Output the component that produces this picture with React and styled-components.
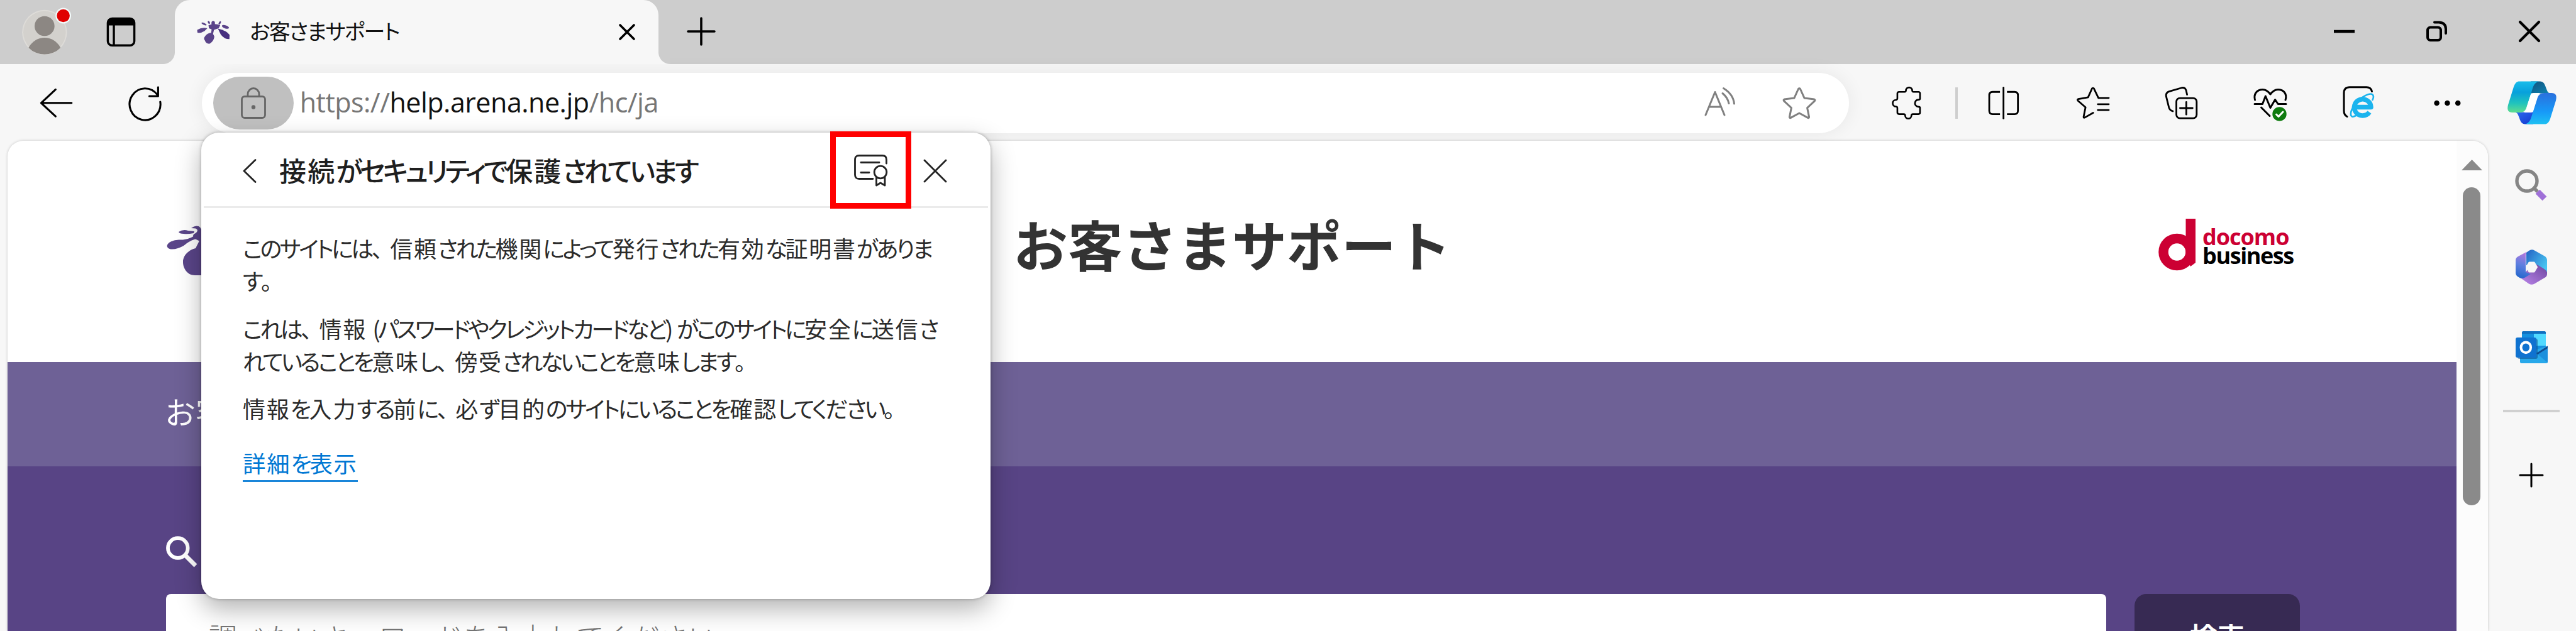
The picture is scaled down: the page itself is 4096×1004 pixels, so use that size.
import React from 'react';
import styled, { createGlobalStyle } from 'styled-components';

//? Styling
const GlobalStyle = createGlobalStyle`
  * {
    box-sizing: border-box;
  }
  body {
    margin: 0;
    overflow: hidden;
    background: #f7f7f7;
    font-family: 'Noto Sans CJK JP', 'Noto Sans', sans-serif;
  }
  p, h1, h2 {
    margin: 0;
    font-weight: 400;
  }
`;

const Browser = styled.div`
  position: relative;
  display: flex;
  flex-direction: column;
  width: 4096px;
  height: 1004px;
  overflow: hidden;
  background: #f7f7f7;
`;

const Svg = styled.svg`
  display: block;
  flex: none;
  overflow: visible;
  margin-left: ${(p) => p.$ml || 0}px;
  margin-top: ${(p) => p.$mt || 0}px;
`;

//* Tab strip
const TabStrip = styled.header`
  display: flex;
  align-items: center;
  height: 102px;
  background: #cdcdcd;
`;

const Tab = styled.div`
  position: relative;
  display: flex;
  align-items: center;
  width: 769px;
  height: 102px;
  margin-left: 62px;
  padding: 0 37px 0 34px;
  border-radius: 24px 24px 0 0;
  background: #f7f7f7;

  &::before,
  &::after {
    content: '';
    position: absolute;
    bottom: 0;
    width: 19px;
    height: 19px;
  }
  &::before {
    left: -19px;
    background: radial-gradient(circle at 0 0, #cdcdcd 18.5px, #f7f7f7 19.5px);
  }
  &::after {
    right: -19px;
    background: radial-gradient(circle at 100% 0, #cdcdcd 18.5px, #f7f7f7 19.5px);
  }
`;

const TabTitle = styled.span`
  flex: 1;
  margin: -5px 0 0 31px;
  color: #111;
  font-size: 34px;
  line-height: 60px;
  letter-spacing: -1.9px;
  font-feature-settings: 'palt';
  white-space: nowrap;
`;

const WindowControls = styled.div`
  display: flex;
  align-items: center;
  gap: 114px;
  margin: -3px 57px 0 auto;
`;

//* Toolbar
const Toolbar = styled.div`
  display: flex;
  align-items: center;
  height: 122px;
  padding-top: 1px;
`;

const AddressBar = styled.div`
  display: flex;
  align-items: center;
  width: 2619px;
  height: 96px;
  margin-left: 63px;
  padding: 0 53px 0 18px;
  border-radius: 48px;
  background: #fff;
  box-shadow: 0 0 30px rgba(0, 0, 0, 0.07);
`;

const SecurityPill = styled.div`
  display: flex;
  align-items: center;
  justify-content: center;
  width: 128px;
  height: 84px;
  border-radius: 42px;
  background: #c0c0c0;
`;

const Url = styled.span`
  flex: 1;
  margin: -1px 0 0 10px;
  color: #767676;
  font-family: 'Open Sans', 'Noto Sans', sans-serif;
  font-size: 43px;
  line-height: 60px;
  letter-spacing: -0.5px;

  b {
    color: #111;
    font-weight: 400;
  }
`;

const ToolbarDivider = styled.div`
  width: 4px;
  height: 50px;
  margin: 0 46px 0 52px;
  background: #cecece;
`;

//* Page
const Main = styled.div`
  display: flex;
  flex: 1;
  min-height: 0;
`;

const Page = styled.div`
  display: flex;
  width: 3944px;
  margin-left: 12px;
  border-radius: 25px 25px 0 0;
  background: #fff;
  box-shadow: 0 0 4px rgba(0, 0, 0, 0.2);
  overflow: hidden;
`;

const Site = styled.div`
  display: flex;
  flex-direction: column;
  width: 3894px;
`;

const SiteHeader = styled.div`
  display: flex;
  align-items: flex-start;
  height: 352px;
`;

const SiteTitle = styled.h1`
  width: 720px;
  margin: 113px 0 0 1237px;
  color: #333;
  font-size: 87px;
  font-weight: 700;
  line-height: 100px;
  white-space: nowrap;
`;

const Docomo = styled.div`
  display: flex;
  margin: 124px 0 0 1101px;
`;

const DocomoText = styled.div`
  margin: 14px 0 0 11px;
  font-family: 'Open Sans', sans-serif;
  font-weight: 700;
  font-size: 36px;
  line-height: 30px;
`;

const DocomoName = styled.div`
  color: #cc0033;
  letter-spacing: -1px;
`;

const DocomoUnit = styled.div`
  color: #000;
  letter-spacing: -1.4px;
`;

const SiteNav = styled.nav`
  height: 166px;
  padding: 43px 0 0 250px;
  background: #6e6196;
  color: #fff;
  font-size: 49px;
  line-height: 70px;
`;

const Hero = styled.section`
  flex: 1;
  min-height: 0;
  padding-left: 252px;
  background: #584485;
`;

const SearchRow = styled.div`
  display: flex;
  height: 130px;
  margin-top: 40px;
`;

const SearchInput = styled.div`
  width: 3085px;
  padding: 28px 0 0 68px;
  border-radius: 8px;
  background: #fff;
  color: #757575;
  font-size: 45px;
  font-weight: 300;
  line-height: 80px;
`;

const SearchButton = styled.div`
  width: 263px;
  margin-left: 45px;
  padding-top: 27px;
  border-radius: 19px;
  background: #372a53;
  color: #fff;
  font-size: 44px;
  font-weight: 700;
  line-height: 80px;
  text-align: center;
`;

const Scrollbar = styled.div`
  width: 50px;
  padding-left: 8px;
  background: #fcfcfc;
`;

const Thumb = styled.div`
  width: 28px;
  height: 506px;
  margin: 27px 0 0 2px;
  border-radius: 14px;
  background: #8a8a8a;
`;

//* Edge sidebar
const Sidebar = styled.aside`
  display: flex;
  flex-direction: column;
  align-items: center;
  width: 140px;
  padding-right: 2px;
`;

const SidebarDivider = styled.div`
  width: 90px;
  height: 4px;
  margin-top: 74px;
  background: #d0d0d0;
`;

//* Site information popup
const Popup = styled.div`
  position: absolute;
  left: 320px;
  top: 211px;
  width: 1255px;
  height: 742px;
  border-radius: 28px;
  background: #fff;
  box-shadow: 0 0 5px rgba(0, 0, 0, 0.3), 0 16px 40px rgba(0, 0, 0, 0.3);
`;

const PopupHeader = styled.div`
  display: flex;
  align-items: center;
  height: 120px;
  margin: 0 4px;
  padding: 4px 0 0 62px;
  border-bottom: 3px solid #ebebeb;
`;

const PopupTitle = styled.h2`
  width: 702px;
  margin: -4px 0 0 36px;
  color: #1f1f1f;
  font-size: 43px;
  font-weight: 500;
  line-height: 60px;
  white-space: nowrap;
`;

const Highlight = styled.div`
  position: absolute;
  left: 1000px;
  top: -2px;
  width: 129px;
  height: 123px;
  border: 9.5px solid #f00;
`;

const PopupBody = styled.div`
  padding: 37px 0 0 66px;
  color: #2b2b2b;
  font-weight: 300;
`;

const Paragraph = styled.p`
  margin-bottom: 23.5px;
`;

const TextLine = styled.span`
  display: block;
  font-size: 36px;
  line-height: 52px;
  white-space: nowrap;
`;

const DetailsLink = styled.a`
  display: inline-block;
  height: 57px;
  margin-top: 11px;
  border-bottom: 3px solid #1a86d9;
  color: #0078d4;
  font-size: 36.4px;
  font-weight: 400;
  line-height: 52px;
`;

//* UI text: kana is set tight, kanji keeps its full width
const Kana = styled.span`
  letter-spacing: ${(p) => p.$tight}em;
  word-spacing: 0.14em;
  font-feature-settings: 'palt';
`;

const Kanji = styled.span`
  letter-spacing: 0.05em;
`;

const Mark = styled.span`
  letter-spacing: -0.18em;
`;

function UiText({ children, tight = -0.1 }) {
  return children
    .split(/([一-龠]+|[、。])/)
    .filter(Boolean)
    .map((run, i) => {
      if (/[、。]/.test(run)) return <Mark key={i}>{run}</Mark>;
      if (/[一-龠]/.test(run)) return <Kanji key={i}>{run}</Kanji>;
      return <Kana key={i} $tight={tight}>{run}</Kana>;
    });
}

//? Icons
function Icon({ box, scale = 1, ml, mt, stroke = '#000', width = 3, children }) {
  return (
    <Svg
      $ml={ml}
      $mt={mt}
      width={box[2] * scale}
      height={box[3] * scale}
      viewBox={box.join(' ')}
      fill="none"
      stroke={stroke}
      strokeWidth={width}
      strokeLinecap="round"
      strokeLinejoin="round"
    >
      {children}
    </Svg>
  );
}

const S = 0.3103;

const Avatar = () => (
  <Icon box={[45, 10, 260, 250]} scale={S} ml={32.6} stroke="none">
    <circle cx="167" cy="137" r="115" fill="#dedcd8" />
    <circle cx="167" cy="137" r="109" fill="#d3d1cd" />
    <circle cx="167" cy="105" r="51" fill="#8c8783" />
    <path d="M85 216C104 182 134 165 167 165s63 17 82 51A115 115 0 0 1 85 216z" fill="#8c8783" />
    <circle cx="263" cy="52" r="40" fill="#f2fbfb" />
    <circle cx="263" cy="52" r="33" fill="#e00000" />
  </Icon>
);

const TabsIcon = () => (
  <Icon box={[480, 55, 155, 158]} scale={S} ml={54.3} width={11}>
    <rect x="491" y="66" width="136" height="138" rx="22" />
    <path d="M491 102V88q0-22 22-22h92q22 0 22 22v14z" fill="#000" stroke="none" />
    <path d="M522 100v102" />
  </Icon>
);

const Favicon = () => (
  <Icon box={[945, 65, 175, 130]} scale={S} stroke="none">
    <g fill="#5a4389">
      <path d="M1008 94q32-12 60 0l-8 16-24 8-5 22-10-4 3-20-14-6z" />
      <path d="M950 118q28-16 52-8l-14 14q-22 14-37 8z" />
      <path d="M986 158q10-20 28-24 18-2 24 20-4 26-26 36-18-2-22-16-8-8-4-16z" />
      <path d="M1056 112q44 10 60 32l-1 22q-26 0-44-24z" fill="#472f80" />
      <ellipse cx="1095" cy="103" rx="19" ry="8" transform="rotate(18 1095 103)" />
      <ellipse cx="985" cy="88" rx="14" ry="5" transform="rotate(25 985 88)" />
      <ellipse cx="1032" cy="84" rx="9" ry="12" />
      <ellipse cx="1066" cy="82" rx="5" ry="9" transform="rotate(30 1066 82)" />
      <ellipse cx="1010" cy="80" rx="5" ry="8" transform="rotate(-30 1010 80)" />
    </g>
  </Icon>
);

const CloseIcon = ({ size, ml, width = 3.6, color = '#000' }) => (
  <Icon box={[0, 0, size, size]} ml={ml} width={width} stroke={color}>
    <path d={`M2 2L${size - 2} ${size - 2}M${size - 2} 2L2 ${size - 2}`} />
  </Icon>
);

const PlusIcon = ({ size, ml, mt, width = 3.6 }) => (
  <Icon box={[0, 0, size, size]} ml={ml} mt={mt} width={width}>
    <path d={`M${size / 2} 1V${size - 1}M1 ${size / 2}H${size - 1}`} />
  </Icon>
);

const BackIcon = () => (
  <Icon box={[140, 410, 180, 160]} scale={S} ml={62} width={10}>
    <path d="M307 490H152M225 421L151 490L225 559" />
  </Icon>
);

const RefreshIcon = () => (
  <Icon box={[595, 405, 176, 180]} scale={S} ml={85.3} width={10}>
    <path d="M762 489A79 81 0 1 1 748 454M751 414V460H706" />
  </Icon>
);

const LockIcon = () => (
  <Icon box={[0, 0, 40, 50]} stroke="#666" width={2.8}>
    <rect x="1.5" y="14.5" width="37" height="34" rx="4.5" />
    <path d="M11 14V10.5a9 9 0 0 1 18 0V14" />
    <circle cx="20" cy="31.5" r="3.2" fill="#666" stroke="none" />
  </Icon>
);

const ReadAloudIcon = () => (
  <Icon box={[0, 0, 49, 50]} stroke="#808080" width={3}>
    <path d="M2 44L17 7.5L32 44M7.5 31H26.5M29 9.5Q37 16 39 25.5M30.5 1.5Q46 11 47.5 26" />
  </Icon>
);

const StarIcon = () => (
  <Icon box={[0, 0, 52, 50]} ml={76} stroke="#808080" width={3}>
    <path d="M24.5 2.5q1.5-2 3 0l6.6 14.6 15.8 2q1.8.8.5 2.6L38.6 32.6l3 14.6q-.2 2-2 1.2L26 41 12.4 48.4q-1.8.8-2-1.2l3-14.6L1.6 21.7q-1.3-1.8.5-2.6l15.8-2z" />
  </Icon>
);

const PuzzleIcon = () => (
  <Icon box={[15, 45, 160, 180]} scale={S} ml={67.5} width={8.5}>
    <path d="M56 78H84Q90 78 91 71A16 16 0 0 1 123 71Q124 78 130 78H155Q163 78 163 86V112Q163 118 155 118A18 18 0 0 0 155 154Q163 154 163 160V184Q163 192 155 192H126Q120 192 119 199A16 16 0 0 1 87 199Q86 192 80 192H56Q47 192 47 184V160Q47 154 40 153A17 17 0 0 1 40 119Q47 118 47 112V86Q47 78 56 78z" />
  </Icon>
);

const SplitIcon = () => (
  <Icon box={[505, 45, 175, 180]} scale={S} width={9}>
    <path d="M573 78H535Q518 78 518 95V175Q518 192 535 192H573M609 78H648Q665 78 665 95V175Q665 192 648 192H609" strokeLinecap="butt" />
    <path d="M591 56V214" />
  </Icon>
);

const FavoritesIcon = () => (
  <Icon box={[960, 45, 180, 180]} scale={S} ml={87} width={9}>
    <path d="M1131 109H1078L1055 61Q1050 55 1045 61L1025 106L975 115Q968 117 973 123L1012 157L1002 206Q1002 213 1009 209L1051 185M1075 141H1131M1075 171H1131" />
  </Icon>
);

const CollectionsIcon = () => (
  <Icon box={[1415, 45, 175, 180]} scale={S} ml={85.3} width={9}>
    <rect x="1478" y="110" width="104" height="103" rx="18" />
    <path d="M1529 130V194M1497 161H1561M1533 92L1528 70Q1522 53 1505 57L1440 76Q1422 83 1426 102L1440 158Q1444 172 1460 177" />
  </Icon>
);

const HealthIcon = () => (
  <Icon box={[0, 0, 56, 56]} ml={86}>
    <path d="M3.5 23C1 13 7 6.5 16 6.5C21 6.5 25 10 28 14C31 10 35 6.5 40 6.5C49 6.5 55 13 52 23M3 29.5H15.5L20.3 17L28 35.5L35.6 22.5L40.2 29.5H53M13.5 35L27 48.5" />
    <circle cx="42.5" cy="45.4" r="11.2" fill="#0f7b0f" stroke="none" />
    <path d="M37.5 46L41 49.5L48 42" stroke="#fff" />
  </Icon>
);

const IeModeIcon = () => (
  <Icon box={[0, 0, 54, 56]} ml={84}>
    <path d="M10 49.5Q5 47 5 40V12Q5 2.8 14 2.8H41Q48 3 49.5 9.5" />
    <path d="M24 34.5H48A13.3 13 0 1 0 45.5 42.5" stroke="#1bb4ee" strokeWidth="7.5" strokeLinecap="butt" />
    <path d="M24 48C13 54 14 42 22 30.5C30 19 46 11 50.5 14.5C52.5 16.5 52 20 50.5 23" stroke="#1bb4ee" strokeWidth="2.6" />
  </Icon>
);

const MoreIcon = () => (
  <Icon box={[0, 0, 48, 20]} ml={92} stroke="none">
    <g fill="#000">
      <circle cx="6.6" cy="10" r="4.3" />
      <circle cx="23.4" cy="10" r="4.3" />
      <circle cx="40.2" cy="10" r="4.3" />
    </g>
  </Icon>
);

const CopilotIcon = () => (
  <Icon box={[0, 0, 80, 71]} ml={70} stroke="none">
    <defs>
      <linearGradient id="cpLeft" x1="0" y1="0" x2="0" y2="1">
        <stop offset="0" stopColor="#18bdea" />
        <stop offset="0.35" stopColor="#07a0dc" />
        <stop offset="0.7" stopColor="#20c3bd" />
        <stop offset="1" stopColor="#5fdd8f" />
      </linearGradient>
      <linearGradient id="cpRight" x1="0" y1="0" x2="0" y2="1">
        <stop offset="0" stopColor="#2a70dd" />
        <stop offset="0.6" stopColor="#1799f8" />
        <stop offset="1" stopColor="#1fc0f2" />
      </linearGradient>
      <linearGradient id="cpTop" x1="0" y1="0" x2="1" y2="1">
        <stop offset="0" stopColor="#10527e" />
        <stop offset="1" stopColor="#0e86b4" />
      </linearGradient>
      <linearGradient id="cpBottom" x1="0" y1="0" x2="1" y2="1">
        <stop offset="0" stopColor="#2c6cf0" />
        <stop offset="1" stopColor="#1438cf" />
      </linearGradient>
    </defs>
    <path d="M38 1.5H53C58 1.5 60 5 62 11L64 16C65 19 67 20.5 71 20.5H38z" fill="url(#cpTop)" />
    <path d="M42 69.5H29C24 69.5 22 66 20 60L18 55C17 52 15 50.5 11 50.5H42z" fill="url(#cpBottom)" />
    <path d="M20 1.5H51C44 3 42 9 40 16L32 41C30 48 27 51 20 51H9C2 51 0 47 2 39L11 10C13 4 16 1.5 20 1.5z" fill="url(#cpLeft)" />
    <path d="M60 69.5H29C36 68 38 62 40 55L48 30C50 23 53 20 60 20H71C78 20 80 24 78 32L69 61C67 67 64 69.5 60 69.5z" fill="url(#cpRight)" />
    <path d="M46.5 20H53C50.5 21.5 49.5 24 48 29L42 48C41 50.5 39 51 37 51H27C30 50 31 45 32 41L38 22.5C39 20.5 40 20 46.5 20z" fill="#fff" />
  </Icon>
);

const IrisLogo = () => (
  <Icon box={[0, 0, 110, 90]} ml={252} mt={131} stroke="none">
    <g fill="#5a4589">
      <path d="M2 38C0 31 12 26 24 26.5C32 26.5 38 24 44 21L49 25C42 26 34 31 28 36C18 42 5 44 2 38z" />
      <path d="M20 14Q27 9.5 35 12L45 13L44 16Q34 18 28 17Q21 17 20 14z" />
      <path d="M40 8Q46 3 52 5Q58 8 58 22L56 30L44 24Q41 18 47 16Q53 11 47 8.5Q44 8 40 8z" />
      <path d="M27 62C27 50 38 42 47 40L54 26L68 30L60 83H46C34 83 27 72 27 62z" />
    </g>
  </Icon>
);

const SearchGlyph = () => (
  <Icon box={[0, 0, 52, 52]} mt={111} stroke="#fff" width={5.8}>
    <circle cx="18.8" cy="19" r="15.8" />
    <path d="M31 31L47 47" strokeWidth="6.8" strokeLinecap="butt" />
  </Icon>
);

const SidebarSearch = () => (
  <Icon box={[0, 0, 52, 52]} mt={45} stroke="#858585" width={5.4}>
    <circle cx="19" cy="19" r="16" />
    <path d="M31 31L36 36" strokeLinecap="butt" />
    <path d="M36 36L47 47" stroke="#9f70d8" strokeWidth="9.5" strokeLinecap="butt" />
  </Icon>
);

const Microsoft365 = () => (
  <Icon box={[0, 0, 51, 56]} mt={76} stroke="none">
    <defs>
      <linearGradient id="msLeft" x1="0.5" y1="0" x2="0.3" y2="1">
        <stop offset="0" stopColor="#b877dd" />
        <stop offset="0.5" stopColor="#5e7fe0" />
        <stop offset="1" stopColor="#2467cc" />
      </linearGradient>
      <linearGradient id="msTop" x1="0" y1="0" x2="1" y2="0.7">
        <stop offset="0" stopColor="#2462c4" />
        <stop offset="1" stopColor="#48c6f2" />
      </linearGradient>
      <linearGradient id="msBottom" x1="0" y1="1" x2="1" y2="0">
        <stop offset="0" stopColor="#c28bf0" />
        <stop offset="1" stopColor="#664099" />
      </linearGradient>
    </defs>
    <path d="M6 44Q1 41 1 36L16 36L30 18L50 26V39Q50 43 46 45L30 54.5Q25.5 57 21 54.5z" fill="url(#msBottom)" />
    <path d="M17 5L21 2Q25.5-1 30 1.5L46 10.5Q50 13 50 17V36Q48 32 44 30L34 24L17 25z" fill="url(#msTop)" />
    <path d="M18 3.5Q16 5 16 10V36L24 39L15 44.5Q9 47.5 4 43.5Q0 41 0 37V17Q0 13 4 11z" fill="url(#msLeft)" />
    <path d="M21.5 20.5H29.5L34 28L29.5 35.5H21.5L17 28z" fill="#f7f7f7" stroke="#f7f7f7" strokeWidth="2" />
  </Icon>
);

const Outlook = () => (
  <Icon box={[0, 0, 51, 51]} mt={74} stroke="none">
    <rect x="10" y="0" width="38" height="30" rx="2.5" fill="#1490df" />
    <path d="M10 3Q10 0 12.5 0H45.5Q48 0 48 3V4H10z" fill="#0f6fc0" />
    <path d="M29 4H48V23H29z" fill="#50d9ff" />
    <path d="M7 30H30L51 23.5V48.5Q51 51 48.5 51H9.5Q7 51 7 48.5z" fill="#28a8ea" />
    <path d="M51 24V50L33 35z" fill="#1b8fdd" />
    <path d="M33 35L51 23.5V27L35 37z" fill="#0f4c91" />
    <rect x="3" y="12" width="32" height="32" rx="3" fill="#0a4a86" opacity="0.55" />
    <rect x="0" y="10" width="33" height="32" rx="3" fill="#0f72d0" />
    <ellipse cx="16.3" cy="25.8" rx="7.8" ry="8.4" stroke="#fff" strokeWidth="4" />
  </Icon>
);

const CertificateIcon = () => (
  <Icon box={[0, 0, 53, 51]} ml={212} stroke="#222" width={2.8}>
    <path d="M30 38.5H8Q1.5 38.5 1.5 32V8Q1.5 1.5 8 1.5H45Q51.5 1.5 51.5 8V14M11 12.5H40M11 28.5H24" />
    <circle cx="42" cy="28" r="9.8" />
    <path d="M35.5 36V49L42 45L49 49V36" />
  </Icon>
);

function App() {
  return (
    <Browser>
      <GlobalStyle />
      <TabStrip>
        <Avatar />
        <TabsIcon />
        <Tab>
          <Favicon />
          <TabTitle>お客さまサポート</TabTitle>
          <CloseIcon size={26} />
        </Tab>
        <PlusIcon size={44} ml={46} mt={-3} />
        <WindowControls>
          <Icon box={[0, 0, 33, 6]} width={4.6}>
            <path d="M0 3H33" strokeLinecap="butt" />
          </Icon>
          <Icon box={[0, 0, 33, 33]} width={4}>
            <rect x="2" y="10.5" width="21" height="20.5" rx="4.5" />
            <path d="M13 2.5H20Q31 3 31 13V20" />
          </Icon>
          <CloseIcon size={34} width={4.2} />
        </WindowControls>
      </TabStrip>

      <Toolbar>
        <BackIcon />
        <RefreshIcon />
        <AddressBar>
          <SecurityPill>
            <LockIcon />
          </SecurityPill>
          <Url>
            https://<b>help.arena.ne.jp</b>/hc/ja
          </Url>
          <ReadAloudIcon />
          <StarIcon />
        </AddressBar>
        <PuzzleIcon />
        <ToolbarDivider />
        <SplitIcon />
        <FavoritesIcon />
        <CollectionsIcon />
        <HealthIcon />
        <IeModeIcon />
        <MoreIcon />
        <CopilotIcon />
      </Toolbar>

      <Main>
        <Page>
          <Site>
            <SiteHeader>
              {/* most of the logo sits behind the popup */}
              <IrisLogo />
              <SiteTitle>お客さまサポート</SiteTitle>
              <Docomo>
                <Icon box={[0, 0, 59, 82]} stroke="none">
                  <path d="M43.5 0H59V70L51 76L43.5 60z" fill="#cc0033" />
                  <circle cx="29.5" cy="53" r="21.5" stroke="#cc0033" strokeWidth="15.5" />
                </Icon>
                <DocomoText>
                  <DocomoName>docomo</DocomoName>
                  <DocomoUnit>business</DocomoUnit>
                </DocomoText>
              </Docomo>
            </SiteHeader>
            <SiteNav>お客</SiteNav>
            <Hero>
              <SearchGlyph />
              <SearchRow>
                <SearchInput>調べたいキーワードを入力してください</SearchInput>
                <SearchButton>検索</SearchButton>
              </SearchRow>
            </Hero>
          </Site>
          <Scrollbar>
            <Icon box={[0, 0, 33, 17]} mt={30} stroke="none">
              <path d="M16.5 0L33 17H0z" fill="#8a8a8a" />
            </Icon>
            <Thumb />
          </Scrollbar>
        </Page>
        <Sidebar>
          <SidebarSearch />
          <Microsoft365 />
          <Outlook />
          <SidebarDivider />
          <PlusIcon size={38} mt={81} width={3} />
        </Sidebar>
      </Main>

      <Popup>
        <PopupHeader>
          <Icon box={[0, 0, 22, 38]} stroke="#222" width={2.8}>
            <path d="M20 1.5L2 19L20 36.5" />
          </Icon>
          <PopupTitle>
            <UiText>接続がセキュリティで保護されています</UiText>
          </PopupTitle>
          <CertificateIcon />
          <CloseIcon size={38} ml={57} width={2.8} color="#222" />
        </PopupHeader>
        <Highlight />
        <PopupBody>
          <Paragraph>
            <TextLine>
              <UiText>このサイトには、信頼された機関によって発行された有効な証明書がありま</UiText>
            </TextLine>
            <TextLine>
              <UiText>す。</UiText>
            </TextLine>
          </Paragraph>
          <Paragraph>
            <TextLine>
              <UiText tight={-0.104}>これは、情報 (パスワードやクレジットカードなど) がこのサイトに安全に送信さ</UiText>
            </TextLine>
            <TextLine>
              <UiText>れていることを意味し、傍受されないことを意味します。</UiText>
            </TextLine>
          </Paragraph>
          <Paragraph>
            <TextLine>
              <UiText tight={-0.09}>情報を入力する前に、必ず目的のサイトにいることを確認してください。</UiText>
            </TextLine>
          </Paragraph>
          <DetailsLink>
            <UiText>詳細を表示</UiText>
          </DetailsLink>
        </PopupBody>
      </Popup>
    </Browser>
  );
}

export default App;
